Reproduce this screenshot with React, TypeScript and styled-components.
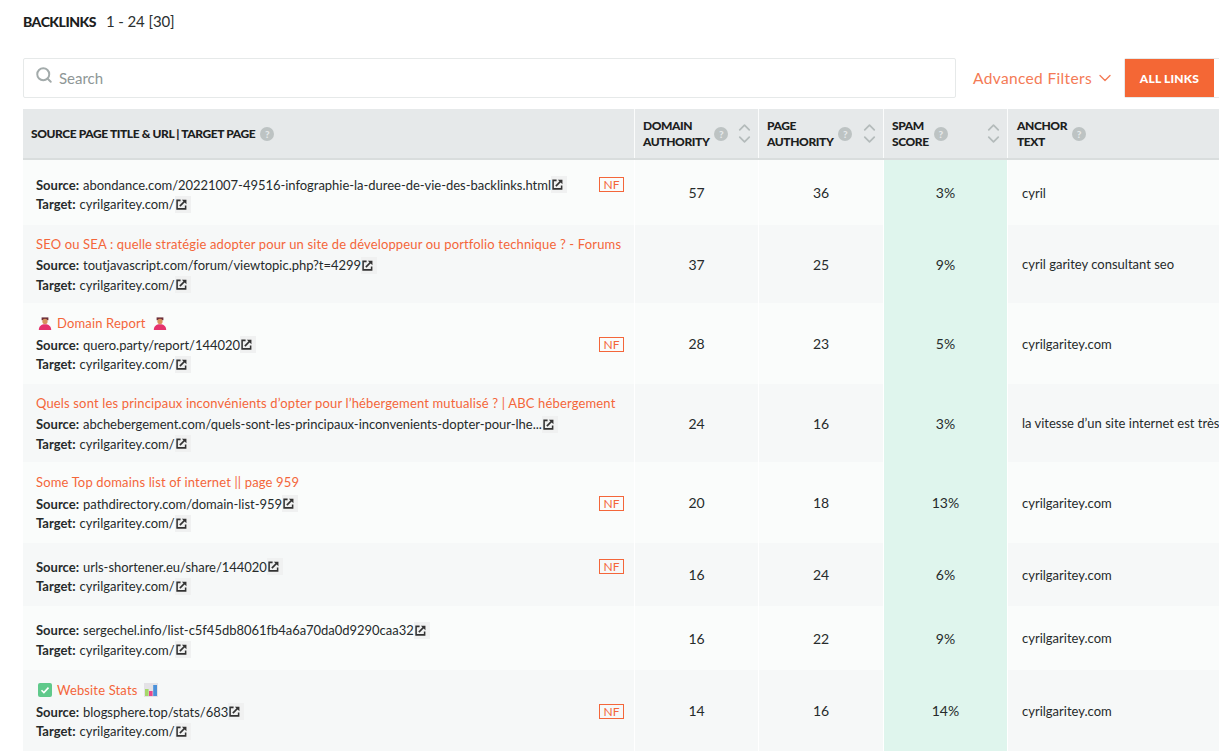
import * as React from 'react'
import styled, { createGlobalStyle } from 'styled-components'
import { ChevronDown, ChevronUp, Search } from 'lucide-react'

type Emoji = 'person' | 'check' | 'chart'

type Backlink = {
  title?: string
  before?: Emoji
  after?: Emoji
  source: string
  target: string
  nofollow?: boolean
  domainAuthority: number
  pageAuthority: number
  spam: number
  anchor: string
  height: number
}

const backlinks: Backlink[] = [
  {
    source: 'abondance.com/20221007-49516-infographie-la-duree-de-vie-des-backlinks.html',
    target: 'cyrilgaritey.com/',
    nofollow: true,
    domainAuthority: 57,
    pageAuthority: 36,
    spam: 3,
    anchor: 'cyril',
    height: 65,
  },
  {
    title: 'SEO ou SEA : quelle stratégie adopter pour un site de développeur ou portfolio technique ? - Forums',
    source: 'toutjavascript.com/forum/viewtopic.php?t=4299',
    target: 'cyrilgaritey.com/',
    domainAuthority: 37,
    pageAuthority: 25,
    spam: 9,
    anchor: 'cyril garitey consultant seo',
    height: 78,
  },
  {
    title: 'Domain Report',
    before: 'person',
    after: 'person',
    source: 'quero.party/report/144020',
    target: 'cyrilgaritey.com/',
    nofollow: true,
    domainAuthority: 28,
    pageAuthority: 23,
    spam: 5,
    anchor: 'cyrilgaritey.com',
    height: 81,
  },
  {
    title: 'Quels sont les principaux inconvénients d’opter pour l’hébergement mutualisé ? | ABC hébergement',
    source: 'abchebergement.com/quels-sont-les-principaux-inconvenients-dopter-pour-lhe...',
    target: 'cyrilgaritey.com/',
    domainAuthority: 24,
    pageAuthority: 16,
    spam: 3,
    anchor: 'la vitesse d’un site internet est très importante pour le référencement',
    height: 78,
  },
  {
    title: 'Some Top domains list of internet || page 959',
    source: 'pathdirectory.com/domain-list-959',
    target: 'cyrilgaritey.com/',
    nofollow: true,
    domainAuthority: 20,
    pageAuthority: 18,
    spam: 13,
    anchor: 'cyrilgaritey.com',
    height: 81,
  },
  {
    source: 'urls-shortener.eu/share/144020',
    target: 'cyrilgaritey.com/',
    nofollow: true,
    domainAuthority: 16,
    pageAuthority: 24,
    spam: 6,
    anchor: 'cyrilgaritey.com',
    height: 63,
  },
  {
    source: 'sergechel.info/list-c5f45db8061fb4a6a70da0d9290caa32',
    target: 'cyrilgaritey.com/',
    domainAuthority: 16,
    pageAuthority: 22,
    spam: 9,
    anchor: 'cyrilgaritey.com',
    height: 64,
  },
  {
    title: 'Website Stats',
    before: 'check',
    after: 'chart',
    source: 'blogsphere.top/stats/683',
    target: 'cyrilgaritey.com/',
    nofollow: true,
    domainAuthority: 14,
    pageAuthority: 16,
    spam: 14,
    anchor: 'cyrilgaritey.com',
    height: 81,
  },
]

const EmojiIcon: React.FC<{ kind: Emoji }> = ({ kind }) => {
  if (kind === 'check') {
    return (
      <EmojiSvg viewBox="0 0 14 14">
        <rect width="14" height="14" rx="2" fill="#5fc98b" />
        <path d="M3.5 7.2l2.4 2.4 4.6-5" fill="none" stroke="#fff" strokeWidth="1.6" />
      </EmojiSvg>
    )
  }
  if (kind === 'chart') {
    return (
      <EmojiSvg viewBox="0 0 14 14">
        <rect width="14" height="14" fill="#e4e2e6" />
        <rect x="1" y="6" width="3.6" height="7" fill="#a5d86a" />
        <rect x="5" y="8" width="3.6" height="5" fill="#e8488a" />
        <rect x="9.2" y="2" width="3.8" height="11" fill="#4a90d9" />
      </EmojiSvg>
    )
  }
  return (
    <EmojiSvg viewBox="0 0 14 14">
      <path d="M3.6 1.4h6.8v2.8H3.6z" fill="#6d2f3a" />
      <circle cx="7" cy="5.4" r="2.6" fill="#d8925c" />
      <path d="M.8 14c0-3.8 2.6-5.8 6.2-5.8s6.2 2 6.2 5.8z" fill="#e5326c" />
    </EmojiSvg>
  )
}

const OpenIcon: React.FC = () => (
  <OpenSvg viewBox="0 0 12 12">
    <path d="M5 1.5H1.2v9.3h9.3V7" fill="none" stroke="#333" strokeWidth="1.7" />
    <path d="M4.2 7.8L9.6 2.4" fill="none" stroke="#333" strokeWidth="1.8" />
    <path d="M6.4.8h5v5z" fill="#333" />
  </OpenSvg>
)

const HelpIcon: React.FC = () => <Help>?</Help>

const SortArrows: React.FC = () => (
  <Sort>
    <ChevronUp size={19} strokeWidth={2.2} />
    <ChevronDown size={19} strokeWidth={2.2} />
  </Sort>
)

const LinkLine: React.FC<{ label: string; url: string; nofollow?: boolean }> = ({ label, url, nofollow }) => (
  <Line>
    <LineText>
      <Label>{label}:</Label>
      <Url>{url}</Url>
      <OpenChip>
        <OpenIcon />
      </OpenChip>
    </LineText>
    {nofollow && <NfBadge>NF</NfBadge>}
  </Line>
)

const App: React.FC = () => {
  return (
    <Page>
      <GlobalStyle />
      <Heading>
        <HeadingTitle>BACKLINKS</HeadingTitle>
        <HeadingCount>1 - 24 [30]</HeadingCount>
      </Heading>

      <Toolbar>
        <SearchBox>
          <Search size={18} color="#a3abab" strokeWidth={2.6} />
          <SearchInput placeholder="Search" />
        </SearchBox>
        <FiltersButton>
          Advanced Filters
          <ChevronDown size={20} strokeWidth={1.6} />
        </FiltersButton>
        <LinkTabs>
          <AllLinksButton>ALL LINKS</AllLinksButton>
        </LinkTabs>
      </Toolbar>

      <Table>
        <HeaderRow>
          <HeaderCell>
            <HeaderLabel>SOURCE PAGE TITLE &amp; URL | TARGET PAGE</HeaderLabel>
            <HelpIcon />
          </HeaderCell>
          <HeaderCell>
            <HeaderLabel>
              DOMAIN
              <br />
              AUTHORITY
            </HeaderLabel>
            <HelpIcon />
            <SortArrows />
          </HeaderCell>
          <HeaderCell>
            <HeaderLabel>
              PAGE
              <br />
              AUTHORITY
            </HeaderLabel>
            <HelpIcon />
            <SortArrows />
          </HeaderCell>
          <HeaderCell>
            <HeaderLabel>
              SPAM
              <br />
              SCORE
            </HeaderLabel>
            <HelpIcon />
            <SortArrows />
          </HeaderCell>
          <HeaderCell>
            <HeaderLabel>
              ANCHOR
              <br />
              TEXT
            </HeaderLabel>
            <HelpIcon />
          </HeaderCell>
        </HeaderRow>

        {backlinks.map((link, index) => (
          <Row key={link.source} $height={link.height} $striped={index % 2 === 1}>
            <SourceCell $titled={Boolean(link.title)}>
              {link.title && (
                <PageTitle>
                  {link.before && <EmojiIcon kind={link.before} />}
                  {link.title}
                  {link.after && <EmojiIcon kind={link.after} />}
                </PageTitle>
              )}
              <LinkLine label="Source" url={link.source} nofollow={link.nofollow} />
              <LinkLine label="Target" url={link.target} />
            </SourceCell>
            <NumberCell>{link.domainAuthority}</NumberCell>
            <NumberCell>{link.pageAuthority}</NumberCell>
            <SpamCell>{link.spam}%</SpamCell>
            <AnchorCell>{link.anchor}</AnchorCell>
          </Row>
        ))}
      </Table>
    </Page>
  )
}

export default App

const GlobalStyle = createGlobalStyle`
  html, body {
    margin: 0;
    padding: 0;
    background: #fff;
    overflow: hidden;
  }
  * {
    box-sizing: border-box;
  }
`

const Page = styled.div`
  width: 1219px;
  height: 751px;
  overflow: hidden;
  padding: 12px 0 0 23px;
  font-family: 'Lato', 'Noto Sans', sans-serif;
  font-size: 13px;
  color: #262b2b;
`

const Heading = styled.div`
  display: flex;
  align-items: baseline;
  gap: 10px;
  height: 20px;
`

const HeadingTitle = styled.span`
  font-size: 14px;
  font-weight: 900;
  letter-spacing: -0.5px;
  color: #1c2020;
`

const HeadingCount = styled.span`
  font-size: 15px;
  letter-spacing: -0.1px;
  color: #2b3030;
`

const Toolbar = styled.div`
  display: flex;
  align-items: center;
  height: 40px;
  margin-top: 26px;
`

const SearchBox = styled.div`
  flex: none;
  width: 933px;
  height: 40px;
  display: flex;
  align-items: center;
  gap: 4px;
  padding: 0 0 0 11px;
  border: 1px solid #e6e9e9;
  border-radius: 2px;
  svg {
    margin-top: -6px;
  }
`

const SearchInput = styled.input`
  flex: 1;
  border: none;
  outline: none;
  background: transparent;
  font-family: inherit;
  font-size: 15px;
  color: #262b2b;
  &::placeholder {
    color: #8e9696;
  }
`

const FiltersButton = styled.button`
  flex: none;
  display: flex;
  align-items: center;
  gap: 3px;
  width: 168px;
  padding: 0 0 0 17px;
  border: none;
  background: none;
  font-family: inherit;
  font-size: 15.5px;
  letter-spacing: 0.35px;
  color: #f47a55;
`

const LinkTabs = styled.div`
  flex: none;
  width: 110px;
  height: 40px;
  border: 1px solid #e6e9e9;
  border-radius: 2px;
`

const AllLinksButton = styled.button`
  display: block;
  width: 89px;
  height: 38px;
  border: none;
  background: #f46735;
  font-family: inherit;
  font-size: 12px;
  font-weight: 900;
  letter-spacing: 0.2px;
  color: #fff;
`

const Table = styled.div`
  margin-top: 11px;
  width: 1300px;
`

const columns = '612px 124px 125px 124px 315px'

const HeaderRow = styled.div`
  display: grid;
  grid-template-columns: ${columns};
  height: 51px;
  background: #e6e9ea;
  border-bottom: 2px solid #d9dddd;
`

const HeaderCell = styled.div`
  display: flex;
  align-items: center;
  gap: 5px;
  padding: 0 4px 0 8px;
  border-right: 1px solid #fbfcfc;
  &:last-child {
    border-right: none;
    padding-left: 9px;
  }
`

const HeaderLabel = styled.span`
  font-size: 12px;
  font-weight: 900;
  letter-spacing: -0.4px;
  line-height: 16px;
  color: #1c2020;
`

const Help = styled.span`
  flex: none;
  width: 14px;
  height: 14px;
  border-radius: 50%;
  background: #bdc3c3;
  color: #e6e9ea;
  font-size: 10px;
  font-weight: 900;
  line-height: 14px;
  text-align: center;
`

const Sort = styled.span`
  display: flex;
  flex-direction: column;
  margin-left: auto;
  color: #b4bbbb;
  svg {
    display: block;
    margin: -3.5px 0;
  }
`

const Row = styled.div<{ $height: number; $striped: boolean }>`
  display: grid;
  grid-template-columns: ${columns};
  height: ${({ $height }) => $height}px;
  background: ${({ $striped }) => ($striped ? '#f6f8f8' : '#fafcfb')};
`

const SourceCell = styled.div<{ $titled: boolean }>`
  display: flex;
  flex-direction: column;
  justify-content: center;
  padding: ${({ $titled }) => ($titled ? '0' : '4px')} 10px 0 13px;
  border-right: 1px solid #fff;
`

const PageTitle = styled.div`
  display: flex;
  align-items: center;
  gap: 5px;
  height: 20px;
  margin-bottom: 2px;
  letter-spacing: 0.15px;
  color: #f4663a;
  white-space: nowrap;
`

const EmojiSvg = styled.svg`
  flex: none;
  width: 14px;
  height: 14px;
  margin-left: 2px;
`

const Line = styled.div`
  display: flex;
  align-items: center;
  justify-content: space-between;
  height: 19.5px;
  white-space: nowrap;
`

const LineText = styled.span`
  display: inline-flex;
  align-items: center;
`

const Label = styled.span`
  font-weight: 700;
  margin-right: 4px;
`

const Url = styled.span`
  letter-spacing: -0.03px;
`

const OpenChip = styled.span`
  display: inline-flex;
  align-items: center;
  width: 16px;
  height: 17px;
  padding-left: 1px;
  background: #f0f1f1;
`

const OpenSvg = styled.svg`
  width: 11px;
  height: 11px;
`

const NfBadge = styled.span`
  width: 25px;
  height: 15px;
  border: 1px solid #f4663a;
  color: #f4663a;
  font-size: 12px;
  line-height: 13px;
  text-align: center;
`

const NumberCell = styled.div`
  display: flex;
  align-items: center;
  justify-content: center;
  border-right: 1px solid #fff;
  font-size: 14px;
`

const SpamCell = styled(NumberCell)`
  background: #dff5ed;
`

const AnchorCell = styled.div`
  display: flex;
  align-items: center;
  padding-left: 14px;
  white-space: nowrap;
`
